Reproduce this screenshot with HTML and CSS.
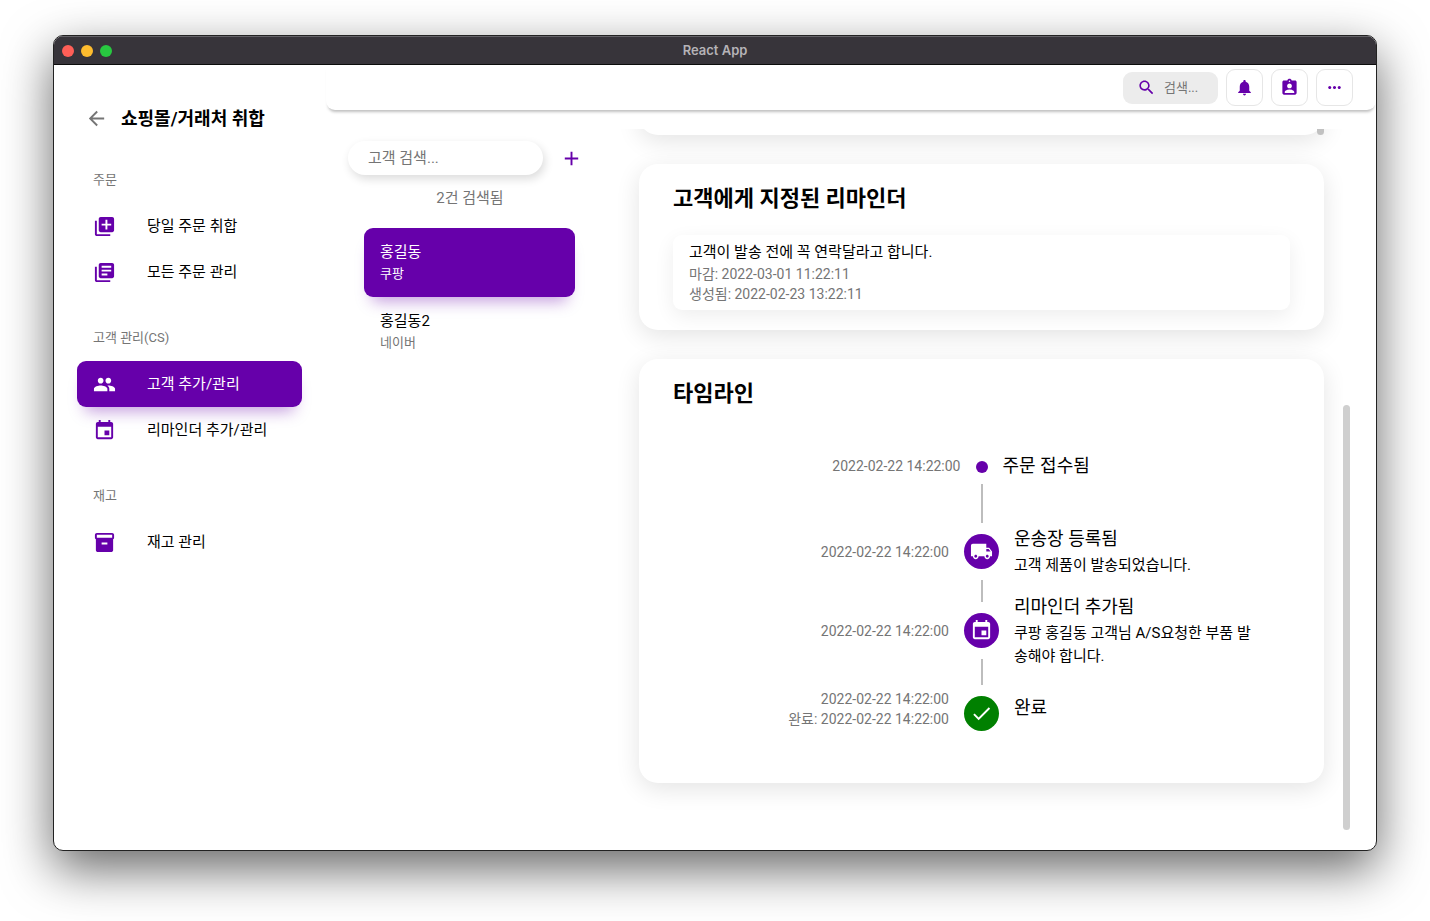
FILE: index.html
```html
<!DOCTYPE html>
<html lang="ko">
<head>
<meta charset="utf-8">
<title>React App</title>
<link rel="stylesheet" href="styles.css">
</head>
<body>
<div class="window">
  <header class="titlebar">
    <div class="lights"><span class="light close"></span><span class="light minimize"></span><span class="light expand"></span></div>
    <span class="window-title">React App</span>
  </header>
  <div class="app">
    <aside class="sidebar">
      <div class="sidebar-head">
        <button class="back" aria-label="뒤로"><svg class="icon" viewBox="0 0 24 24"><path d="M20 11H7.83l5.59-5.59L12 4l-8 8 8 8 1.41-1.41L7.83 13H20v-2z"/></svg></button>
        <h1 class="sidebar-title">쇼핑몰/거래처 취합</h1>
      </div>
      <nav class="nav">
        <section class="nav-group">
          <h2 class="nav-label">주문</h2>
          <a class="nav-item" href="#"><svg class="icon" viewBox="0 0 24 24"><path d="M4 6H2v14c0 1.1.9 2 2 2h14v-2H4V6zm16-4H8c-1.1 0-2 .9-2 2v12c0 1.1.9 2 2 2h12c1.1 0 2-.9 2-2V4c0-1.1-.9-2-2-2zm-1 9h-4v4h-2v-4H9V9h4V5h2v4h4v2z"/></svg>당일 주문 취합</a>
          <a class="nav-item" href="#"><svg class="icon" viewBox="0 0 24 24"><path d="M4 6H2v14c0 1.1.9 2 2 2h14v-2H4V6zm16-4H8c-1.1 0-2 .9-2 2v12c0 1.1.9 2 2 2h12c1.1 0 2-.9 2-2V4c0-1.1-.9-2-2-2zm-1 9H9V9h10v2zm-4 4H9v-2h6v2zm4-8H9V5h10v2z"/></svg>모든 주문 관리</a>
        </section>
        <section class="nav-group">
          <h2 class="nav-label">고객 관리(CS)</h2>
          <a class="nav-item active" href="#"><svg class="icon" viewBox="0 0 24 24"><path d="M16 11c1.66 0 2.99-1.34 2.99-3S17.66 5 16 5c-1.66 0-3 1.34-3 3s1.34 3 3 3zm-8 0c1.66 0 2.99-1.34 2.99-3S9.66 5 8 5C6.34 5 5 6.34 5 8s1.34 3 3 3zm0 2c-2.33 0-7 1.17-7 3.5V19h14v-2.500c0-2.330-4.670-3.500-7-3.500zm8 0c-.29 0-.62.02-.97.05 1.160.84 1.970 1.970 1.970 3.450V19h6v-2.500c0-2.330-4.670-3.500-7-3.500z"/></svg>고객 추가/관리</a>
          <a class="nav-item" href="#"><svg class="icon" viewBox="0 0 24 24"><path d="M17 12h-5v5h5v-5zM16 1v2H8V1H6v2H5c-1.110 0-1.990.9-1.990 2L3 19c0 1.100.890 2 2 2h14c1.100 0 2-.9 2-2V5c0-1.100-.9-2-2-2h-1V1h-2zm3 18H5V8h14v11z"/></svg>리마인더 추가/관리</a>
        </section>
        <section class="nav-group">
          <h2 class="nav-label">재고</h2>
          <a class="nav-item" href="#"><svg class="icon" viewBox="0 0 24 24"><path d="M20 2H4c-1 0-2 .9-2 2v3.010c0 .720.430 1.340 1 1.690V20c0 1.100 1.100 2 2 2h14c.9 0 2-.9 2-2V8.700c.570-.350 1-.970 1-1.690V4c0-1.100-1-2-2-2zm-5 12H9v-2h6v2zm5-7H4V4h16v3z"/></svg>재고 관리</a>
        </section>
      </nav>
    </aside>
    <div class="main">
      <div class="toolbar">
        <label class="tool-search"><svg class="icon small" viewBox="0 0 24 24"><path d="M15.500 14h-.790l-.280-.270C15.410 12.590 16 11.110 16 9.500 16 5.910 13.090 3 9.500 3S3 5.910 3 9.500 5.910 16 9.500 16c1.610 0 3.090-.590 4.230-1.570l.270.280v.790l5 4.990L20.490 19l-4.990-5zm-6 0C7.010 14 5 11.990 5 9.500S7.010 5 9.500 5 14 7.010 14 9.500 11.990 14 9.500 14z"/></svg><input class="tool-input" type="text" placeholder="검색..." aria-label="검색"></label>
        <button class="tool" aria-label="알림"><svg class="icon small" viewBox="0 0 24 24"><path d="M12 22c1.100 0 2-.9 2-2h-4c0 1.100.890 2 2 2zm6-6v-5c0-3.070-1.640-5.640-4.500-6.320V4c0-.830-.670-1.500-1.500-1.500s-1.500.670-1.500 1.500v.680C7.630 5.360 6 7.920 6 11v5l-2 2v1h16v-1l-2-2z"/></svg></button>
        <button class="tool" aria-label="담당자"><svg class="icon small" viewBox="0 0 24 24"><path d="M19 3h-4.180C14.400 1.840 13.300 1 12 1c-1.300 0-2.400.840-2.820 2H5c-1.100 0-2 .9-2 2v14c0 1.100.9 2 2 2h14c1.100 0 2-.9 2-2V5c0-1.100-.9-2-2-2zm-7 0c.550 0 1 .450 1 1s-.450 1-1 1-1-.450-1-1 .450-1 1-1zm0 4c1.660 0 3 1.340 3 3s-1.340 3-3 3-3-1.340-3-3 1.340-3 3-3zm6 12H6v-1.400c0-2 4-3.100 6-3.100s6 1.100 6 3.100V19z"/></svg></button>
        <button class="tool" aria-label="더 보기"><svg class="icon small" viewBox="0 0 24 24"><path d="M6 10c-1.100 0-2 .9-2 2s.9 2 2 2 2-.9 2-2-.9-2-2-2zm12 0c-1.100 0-2 .9-2 2s.9 2 2 2 2-.9 2-2-.9-2-2-2zm-6 0c-1.100 0-2 .9-2 2s.9 2 2 2 2-.9 2-2-.9-2-2-2z"/></svg></button>
      </div>
      <div class="content">
        <section class="customers">
          <div class="customer-tools">
            <input class="customer-search" type="text" placeholder="고객 검색..." aria-label="고객 검색">
            <button class="add" aria-label="고객 추가"><svg class="icon" viewBox="0 0 24 24"><path d="M19 13h-6v6h-2v-6H5v-2h6V5h2v6h6v2z"/></svg></button>
          </div>
          <p class="count">2건 검색됨</p>
          <div class="customer-list">
            <a class="customer active" href="#"><span class="customer-name">홍길동</span><span class="customer-source">쿠팡</span></a>
            <a class="customer" href="#"><span class="customer-name">홍길동2</span><span class="customer-source">네이버</span></a>
          </div>
        </section>
        <main class="detail">
          <div class="cards">
            <section class="card previous"><span class="inner-thumb"></span></section>
            <section class="card">
              <h2 class="card-title">고객에게 지정된 리마인더</h2>
              <article class="reminder">
                <p class="text">고객이 발송 전에 꼭 연락달라고 합니다.</p>
                <p class="meta">마감: 2022-03-01 11:22:11</p>
                <p class="meta">생성됨: 2022-02-23 13:22:11</p>
              </article>
            </section>
            <section class="card">
              <h2 class="card-title">타임라인</h2>
              <ol class="timeline">
                <li class="event">
                  <div class="when first"><p class="meta">2022-02-22 14:22:00</p></div>
                  <div class="rail"><span class="dot plain"></span><span class="line"></span></div>
                  <div class="what first"><h3 class="event-title">주문 접수됨</h3></div>
                </li>
                <li class="event">
                  <div class="when"><p class="meta">2022-02-22 14:22:00</p></div>
                  <div class="rail"><span class="dot"><svg class="icon" viewBox="0 0 24 24"><path d="M20 8h-3V4H3c-1.100 0-2 .9-2 2v11h2c0 1.660 1.340 3 3 3s3-1.340 3-3h6c0 1.660 1.340 3 3 3s3-1.340 3-3h2v-5l-3-4zM6 18.500c-.830 0-1.500-.670-1.500-1.500s.670-1.500 1.500-1.500 1.500.670 1.500 1.500-.670 1.500-1.500 1.500zm13.500-9l1.960 2.500H17V9.500h2.500zm-1.500 9c-.830 0-1.500-.670-1.500-1.500s.670-1.500 1.500-1.500 1.500.670 1.500 1.500-.670 1.500-1.500 1.500z"/></svg></span><span class="line"></span></div>
                  <div class="what"><h3 class="event-title">운송장 등록됨</h3><p class="text">고객 제품이 발송되었습니다.</p></div>
                </li>
                <li class="event">
                  <div class="when"><p class="meta">2022-02-22 14:22:00</p></div>
                  <div class="rail"><span class="dot"><svg class="icon" viewBox="0 0 24 24"><path d="M17 12h-5v5h5v-5zM16 1v2H8V1H6v2H5c-1.110 0-1.990.9-1.990 2L3 19c0 1.100.890 2 2 2h14c1.100 0 2-.9 2-2V5c0-1.100-.9-2-2-2h-1V1h-2zm3 18H5V8h14v11z"/></svg></span><span class="line"></span></div>
                  <div class="what long"><h3 class="event-title">리마인더 추가됨</h3><p class="text">쿠팡 홍길동 고객님 A/S요청한 부품 발송해야 합니다.</p></div>
                </li>
                <li class="event">
                  <div class="when last"><p class="meta">2022-02-22 14:22:00</p><p class="meta">완료: 2022-02-22 14:22:00</p></div>
                  <div class="rail"><span class="dot done"><svg class="icon" viewBox="0 0 24 24"><path d="M9 16.170L4.830 12l-1.420 1.410L9 19 21 7l-1.410-1.410z"/></svg></span></div>
                  <div class="what last"><h3 class="event-title">완료</h3></div>
                </li>
              </ol>
            </section>
          </div>
          <div class="scroll-track"><span class="scroll-thumb"></span></div>
        </main>
      </div>
    </div>
  </div>
</div>
</body>
</html>
```
FILE: styles.css
```css
:root {
  --primary: #6600aa;
  --muted: #757575;
}

* {
  box-sizing: border-box;
}

body {
  margin: 0;
  min-height: 100vh;
  display: flex;
  padding: 35px 53px 70px;
  background: #fff;
  color: #000;
  font-family: Roboto, "Noto Sans CJK KR", sans-serif;
  font-size: 15px;
  line-height: 23px;
}

h1, h2, h3, p, ol {
  margin: 0;
  padding: 0;
}

button, input {
  font: inherit;
  border: 0;
  padding: 0;
  background: none;
}

input::placeholder {
  color: var(--muted);
  opacity: 1;
}

a {
  color: inherit;
  text-decoration: none;
}

.icon {
  display: block;
  flex: none;
  width: 23px;
  height: 23px;
  fill: currentColor;
}

.icon.small {
  width: 19px;
  height: 19px;
}

.window {
  flex: 1;
  min-width: 0;
  display: flex;
  flex-direction: column;
  overflow: hidden;
  border: 1px solid #222;
  border-radius: 10px;
  box-shadow: 0 18px 50px rgba(0, 0, 0, .6);
  background: #fff;
}

.titlebar {
  display: grid;
  grid-template-columns: 1fr auto 1fr;
  align-items: center;
  height: 29px;
  padding: 0 8px;
  background: #37343a;
  border-top: 1px solid #646267;
  border-bottom: 1px solid #0c0c0c;
}

.lights {
  display: flex;
  gap: 7px;
}

.light {
  width: 12px;
  height: 12px;
  border-radius: 50%;
}

.close { background: #ff5f57; }
.minimize { background: #febc2e; }
.expand { background: #28c840; }

.window-title {
  color: #b5b3b7;
  font-family: Inter, sans-serif;
  font-size: 13px;
  font-weight: 600;
}

.app {
  flex: 1;
  display: flex;
}

.sidebar {
  flex: none;
  width: 272px;
  padding: 39px 24px 0 23px;
}

.sidebar-head {
  display: flex;
  align-items: center;
  gap: 13px;
  height: 28px;
  padding-left: 8px;
}

.back {
  color: var(--muted);
}

.sidebar-title {
  font-size: 18px;
  font-weight: 600;
}

.nav {
  display: flex;
  flex-direction: column;
  gap: 19px;
  padding-top: 24px;
}

.nav-label {
  padding-left: 16px;
  color: var(--muted);
  font-size: 13px;
  font-weight: 400;
  line-height: 47px;
}

.nav-item {
  display: flex;
  align-items: center;
  gap: 31px;
  height: 46px;
  padding: 0 16px;
  border-radius: 9px;
}

.nav-item .icon {
  color: var(--primary);
}

.nav-item.active {
  background: var(--primary);
  color: #fff;
  box-shadow: 0 12px 16px -8px rgba(102, 0, 170, .4);
}

.nav-item.active .icon {
  color: #fff;
}

.main {
  flex: 1;
  min-width: 0;
  display: flex;
  flex-direction: column;
}

.toolbar {
  display: flex;
  align-items: center;
  justify-content: flex-end;
  gap: 8px;
  height: 45px;
  padding: 0 23px;
  border-radius: 0 0 9px 9px;
  box-shadow: 0 4px 3px -2px rgba(0, 0, 0, .25);
}

.tool-search {
  display: flex;
  align-items: center;
  gap: 8px;
  width: 95px;
  height: 32px;
  padding: 0 14px;
  border-radius: 9px;
  background: #ececec;
  color: var(--primary);
}

.tool-input {
  flex: 1;
  min-width: 0;
  width: 0;
  font-size: 13px;
}

.tool {
  display: grid;
  place-items: center;
  width: 37px;
  height: 37px;
  border: 1px solid #e6e6e6;
  border-radius: 9px;
  color: var(--primary);
}

.content {
  flex: 1;
  display: flex;
}

.customers {
  flex: none;
  width: 288px;
  padding: 31px 22px 0;
}

.customer-tools {
  display: flex;
  align-items: center;
  gap: 17px;
}

.customer-search {
  width: 195px;
  height: 34px;
  padding: 0 20px;
  border-radius: 17px;
  box-shadow: 2px 4px 10px rgba(0, 0, 0, .14);
}

.add {
  color: var(--primary);
}

.count {
  padding-top: 12px;
  text-align: center;
  color: var(--muted);
}

.customer-list {
  padding: 18px 17px 0 16px;
}

.customer {
  display: flex;
  flex-direction: column;
  padding: 13px 16px;
  border-radius: 9px;
}

.customer-source {
  color: var(--muted);
  font-size: 13px;
  line-height: 20px;
}

.customer.active {
  background: var(--primary);
  color: #fff;
  box-shadow: 0 12px 16px -8px rgba(102, 0, 170, .4);
}

.customer.active .customer-source {
  color: #fff;
}

.detail {
  flex: 1;
  min-width: 0;
  display: flex;
  padding: 19px 26px 20px 0;
}

.cards {
  flex: 1;
  min-width: 0;
  display: flex;
  flex-direction: column;
  gap: 29px;
  overflow: hidden;
  padding: 0 19px 0 25px;
}

.card {
  flex: none;
  padding: 21px 34px 20px;
  border-radius: 19px;
  background: #fff;
  box-shadow: 0 6px 24px rgba(0, 0, 0, .11);
}

.card.previous {
  position: relative;
  height: 40px;
  margin-top: -35px;
}

.inner-thumb {
  position: absolute;
  right: 0;
  bottom: 0;
  width: 7px;
  height: 20px;
  border-radius: 4px;
  background: #c1c1c1;
}

.card-title {
  font-size: 22px;
  font-weight: 600;
  line-height: 28px;
}

.reminder {
  margin-top: 22px;
  padding: 6px 16px;
  border-radius: 9px;
  box-shadow: 0 6px 20px rgba(0, 0, 0, .07);
}

.meta {
  color: var(--muted);
  font-size: 14px;
  line-height: 20px;
}

.timeline {
  display: flex;
  flex-direction: column;
  padding: 42px 16px 5px;
  list-style: none;
}

.event {
  display: flex;
  min-height: 73px;
}

.when, .what {
  flex: 1;
  min-width: 0;
  padding: 0 15px;
}

.when {
  padding-top: 19px;
  text-align: right;
}

.when.first { padding-top: 6px; }
.when.last { padding-top: 4px; }

.what {
  padding-top: 2px;
  padding-bottom: 25px;
}

.what.first,
.what.last {
  padding-bottom: 0;
}

.what.last { padding-top: 9px; }

.what.long {
  margin-top: -11px;
  padding-bottom: 17px;
}

.event-title {
  font-size: 18px;
  font-weight: 400;
  line-height: 27px;
}

.event-title + .text {
  margin-top: 2px;
}

.rail {
  display: flex;
  flex-direction: column;
  align-items: center;
}

.dot {
  display: grid;
  place-items: center;
  width: 35px;
  height: 35px;
  margin: 11px 0;
  border-radius: 50%;
  background: var(--primary);
  color: #fff;
}

.dot.plain {
  width: 12px;
  height: 12px;
}

.dot.done { background: #008000; }

.line {
  flex: 1;
  width: 2px;
  background: #bdbdbd;
}

.scroll-track {
  flex: none;
  width: 7px;
  display: flex;
  flex-direction: column;
  justify-content: flex-end;
}

.scroll-thumb {
  height: 60.6%;
  border-radius: 4px;
  background: #cfcfcf;
}
```
